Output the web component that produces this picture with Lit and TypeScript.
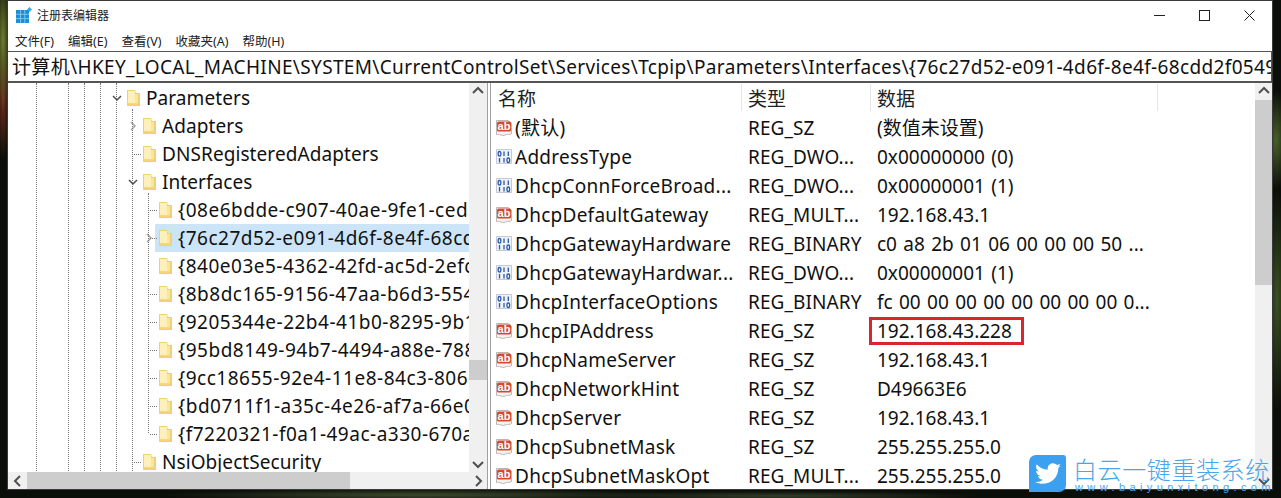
import { LitElement, html, css, svg } from "lit";
import { customElement } from "lit/decorators.js";

type TreeRow = { label: string; x: number; arrow?: "open" | "closed"; sel?: boolean; guid?: boolean };
const treeRows: TreeRow[] = [
  { label: "Parameters", x: 119, arrow: "open" },
  { label: "Adapters", x: 135, arrow: "closed" },
  { label: "DNSRegisteredAdapters", x: 135 },
  { label: "Interfaces", x: 135, arrow: "open" },
  { label: "{08e6bdde-c907-40ae-9fe1-cedd3c7d1f2a}", x: 151, guid: true },
  { label: "{76c27d52-e091-4d6f-8e4f-68cdd2f05492}", x: 151, arrow: "closed", sel: true, guid: true },
  { label: "{840e03e5-4362-42fd-ac5d-2efc8a1e77b0}", x: 151, guid: true },
  { label: "{8b8dc165-9156-47aa-b6d3-55418e2c09d1}", x: 151, guid: true },
  { label: "{9205344e-22b4-41b0-8295-9b1e6a4f0c37}", x: 151, guid: true },
  { label: "{95bd8149-94b7-4494-a88e-78830f2d61ac}", x: 151, guid: true },
  { label: "{9cc18655-92e4-11e8-84c3-806e6f6e6963}", x: 151, guid: true },
  { label: "{bd0711f1-a35c-4e26-af7a-66e0b3d2c815}", x: 151, guid: true },
  { label: "{f7220321-f0a1-49ac-a330-670a4e9d1b26}", x: 151, guid: true },
  { label: "NsiObjectSecurity", x: 135 },
];

/* dotted tree guides: [x, top, height] relative to the tree pane */
const vGuides = [
  [28, 0, 388], [60, 0, 388], [76, 0, 388], [92, 0, 388], [108, 0, 388],
  [124, 26, 362], [140, 110, 240],
];
/* [x, y, width] */
const hGuides = [
  [126, 71, 7], [142, 127, 7], [142, 155, 7], [142, 211, 7], [142, 239, 7], [142, 267, 7],
  [142, 295, 7], [142, 323, 7], [142, 351, 7], [126, 379, 7],
];

type Value = { name: string; type: string; data: string; kind: "ab" | "bin"; mark?: boolean };
const values: Value[] = [
  { name: "(默认)", type: "REG_SZ", data: "(数值未设置)", kind: "ab" },
  { name: "AddressType", type: "REG_DWO...", data: "0x00000000 (0)", kind: "bin" },
  { name: "DhcpConnForceBroad...", type: "REG_DWO...", data: "0x00000001 (1)", kind: "bin" },
  { name: "DhcpDefaultGateway", type: "REG_MULT...", data: "192.168.43.1", kind: "ab" },
  { name: "DhcpGatewayHardware", type: "REG_BINARY", data: "c0 a8 2b 01 06 00 00 00 50 ...", kind: "bin" },
  { name: "DhcpGatewayHardwar...", type: "REG_DWO...", data: "0x00000001 (1)", kind: "bin" },
  { name: "DhcpInterfaceOptions", type: "REG_BINARY", data: "fc 00 00 00 00 00 00 00 00 0...", kind: "bin" },
  { name: "DhcpIPAddress", type: "REG_SZ", data: "192.168.43.228", kind: "ab", mark: true },
  { name: "DhcpNameServer", type: "REG_SZ", data: "192.168.43.1", kind: "ab" },
  { name: "DhcpNetworkHint", type: "REG_SZ", data: "D49663E6", kind: "ab" },
  { name: "DhcpServer", type: "REG_SZ", data: "192.168.43.1", kind: "ab" },
  { name: "DhcpSubnetMask", type: "REG_SZ", data: "255.255.255.0", kind: "ab" },
  { name: "DhcpSubnetMaskOpt", type: "REG_MULT...", data: "255.255.255.0", kind: "ab" },
];

const folder = html`<svg class="folder" width="13" height="16" viewBox="0 0 13 16">
  <path d="M0 0h8l1 3h4v13H0z" fill="#f3d06f"/>
  <path d="M1 1h7v12H1z" fill="#fdf0b8"/>
  <path d="M8 4h3v9H8z" fill="#fbe59a"/>
  <path d="M1 13h10.500v1.500H1z" fill="#f6d878"/>
</svg>`;

const chevOpen = html`<svg width="12" height="12" viewBox="0 0 12 12"><path d="M2 4l4 4 4-4" fill="none" stroke="#4d4d4d" stroke-width="1.500"/></svg>`;
const chevClosed = html`<svg width="12" height="12" viewBox="0 0 12 12"><path d="M4 2l4 4-4 4" fill="none" stroke="#a6a6a6" stroke-width="1.500"/></svg>`;

const abIcon = html`<svg class="vicon" width="16" height="18" viewBox="0 0 16 18">
  <path d="M.5 1.500h11.500l3.500 2.500v10.500c-2 1.500-3.500.5-5 1s-3.500 1.500-5.500.5-3-.5-4.500-.5z" fill="#f7f3ee" stroke="#bdb5b1"/>
  <rect x="1" y="2.500" width="14" height="10" rx="1.500" fill="#d34a30"/>
  <text x="8" y="11" text-anchor="middle" class="abt">ab</text>
</svg>`;
const binIcon = html`<svg class="vicon" width="16" height="18" viewBox="0 0 16 18">
  <path d="M.5 1.500h15v14H.5z" fill="#eff2f8" stroke="#c3c9da"/>
  <g fill="none" stroke="#2d5aa5" stroke-width="1.300">
    <rect x="2.200" y="3.500" width="2.600" height="4.500" rx="1.200"/>
    <path d="M8 3.500v4.500M12.300 3.500v4.500M3.500 10v4.500M8 10v4.500"/>
    <rect x="11" y="10" width="2.600" height="4.500" rx="1.200"/>
  </g>
</svg>`;

const up = svg`<path d="M3 9l5-5 5 5" fill="none" stroke="#505050" stroke-width="2"/>`;
const down = svg`<path d="M3 6l5 5 5-5" fill="none" stroke="#505050" stroke-width="2"/>`;
const left = svg`<path d="M10 3L5 8l5 5" fill="none" stroke="#505050" stroke-width="2"/>`;
const right = svg`<path d="M6 3l5 5-5 5" fill="none" stroke="#505050" stroke-width="2"/>`;
const arrow = (p: unknown) => html`<svg width="16" height="16" viewBox="0 0 16 16">${p}</svg>`;

@customElement("app-root")
export class AppRoot extends LitElement {
  static styles = css`
    :host {
      display: block;
      width: 1281px;
      height: 498px;
      box-sizing: border-box;
      padding: 1px 8px 9px 8px;
      font-family: "Noto Sans", "Noto Sans CJK SC", sans-serif;
      color: #111;
      overflow: hidden;
      position: relative;
      background:
        radial-gradient(ellipse 8px 70px at 3px 40px, #6f7f2e 0, transparent 100%),
        radial-gradient(ellipse 7px 60px at 3px 100px, #6e2c1c 0, transparent 100%),
        radial-gradient(ellipse 14px 50px at 1276px 140px, #47602a 0, transparent 100%),
        radial-gradient(ellipse 12px 110px at 1277px 300px, #3a5223 0, transparent 100%),
        radial-gradient(ellipse 260px 6px at 420px 495px, #3c4a2c 0, transparent 100%),
        radial-gradient(ellipse 200px 5px at 780px 496px, #333d28 0, transparent 100%),
        #0b0f09;
    }
    .win {
      height: 100%;
      width: 1264px;
      background: #fff;
      display: flex;
      flex-direction: column;
      box-shadow: 0 0 0 1px #3a3a3a;
      overflow: hidden;
    }
    .title {
      height: 28px;
      padding: 0 0 1px 8px;
      display: flex;
      align-items: center;
      font-size: 12px;
      flex: none;
    }
    .title .appname { margin-left: 5px; color: #222; }
    .controls { margin-left: auto; display: flex; align-items: center; }
    .controls span { width: 45px; height: 29px; display: flex; align-items: center; justify-content: center; }
    .menu {
      height: 20px;
      padding: 0 0 1px 7px;
      display: flex;
      align-items: center;
      gap: 14px;
      font-size: 12.5px;
      color: #222;
      flex: none;
    }
    .addr {
      height: 32px;
      box-sizing: border-box;
      border-top: 1px solid #555;
      border-bottom: 2px solid #555;
      border-right: 1px solid #555;
      font-size: 19px;
      letter-spacing: .35px;
      line-height: 31px;
      padding-left: 4px;
      white-space: nowrap;
      overflow: hidden;
      flex: none;
    }
    .panes { flex: 1; display: flex; min-height: 0; }
    .left { width: 479px; flex: none; display: flex; flex-direction: column; background: #fff; }
    .left-top { flex: 1; display: flex; min-height: 0; }
    .tree { width: 461px; position: relative; overflow: hidden; padding-top: 1px; flex: none; }
    .row {
      height: 28px;
      font-size: 19px;
      line-height: 28px;
      white-space: nowrap;
      position: relative;
      display: flex;
      align-items: center;
    }
    .row.sel { background: #cce4f8; margin-left: 147px; }
    .row.guid { letter-spacing: .5px; }
    .row.plain { letter-spacing: .08px; }
    .chev { position: absolute; top: 8px; display: flex; }
    .folder { flex: none; margin-right: 6px; }
    .guide { position: absolute; }
    .guide.v { width: 0; border-left: 1px dotted #777; }
    .guide.h { height: 0; border-top: 1px dotted #777; }
    .vbar { width: 18px; flex: none; background: #f0f0f0; display: flex; flex-direction: column; align-items: center; }
    .vbar .arr { height: 17px; display: flex; align-items: center; }
    .vbar .spring { flex: 1; }
    .vthumb { width: 100%; background: #cdcdcd; flex: none; height: 20px; margin-top: 260px; }
    .hbar { height: 17px; flex: none; background: #f0f0f0; display: flex; align-items: center; }
    .hbar .arr { width: 19px; display: flex; justify-content: center; flex: none; }
    .hthumb { height: 100%; width: 323px; background: #cdcdcd; }
    .spring { flex: 1; }
    .sep { width: 4px; flex: none; background: #fff; border-left: 1px solid #a0a0a0; border-right: 1px solid #a0a0a0; box-sizing: border-box; }
    .right { flex: 1; display: flex; min-width: 0; }
    .list { flex: 1; min-width: 0; overflow: hidden; }
    .head, .vrow {
      display: grid;
      grid-template-columns: 251px 129px 287px;
      white-space: nowrap;
    }
    .head { height: 30px; font-size: 19px; color: #222; }
    .head div { padding-left: 6px; border-right: 1px solid #e5e5e5; height: 27px; margin-top: 1px; line-height: 31px; }
    .head div:first-child { padding-left: 7px; }
    .vrow { height: 29px; font-size: 19px; line-height: 28px; align-items: center; }
    .vrow > div { padding-left: 6px; overflow: hidden; }
    .vrow .n { padding-left: 5px; display: flex; align-items: center; gap: 3px; overflow: visible; letter-spacing: .27px; }
    .vrow .d { word-spacing: 1.4px; overflow: visible; }
    .vrow .t { letter-spacing: .1px; }
    .vicon { flex: none; }
    .abt { font: bold 11px "Liberation Sans", sans-serif; fill: #fff; letter-spacing: 0; }
    .mark { display: inline-block; outline: 3px solid #d8262c; padding: 2px 9px 1px 5px; margin-left: -5px; line-height: 19px; }
    .rbar { width: 17px; flex: none; background: #f0f0f0; display: flex; flex-direction: column; align-items: center; }
    .rbar .arr { height: 17px; display: flex; align-items: center; }
    .rthumb { width: 100%; height: 185px; background: #cdcdcd; flex: none; }
    .rbar .arr.b { margin-top: auto; }
    .logo {
      position: absolute;
      left: 1029px;
      top: 455px;
      display: flex;
      gap: 7px;
    }
    .badge {
      width: 37px;
      height: 37px;
      background: #3aa0ef;
      border-radius: 7px 3px 7px 0;
      display: flex;
      align-items: center;
      justify-content: center;
    }
    .lt-col { display: flex; flex-direction: column; margin-top: -1px; }
    .cn { font-size: 24px; font-weight: 300; color: #4aa5ec; line-height: 30px; letter-spacing: .6px; font-family: "Noto Sans CJK SC", sans-serif; white-space: nowrap; }
    .url { font: 11px/9px "Liberation Sans", sans-serif; color: #4aa5ec; letter-spacing: 4.400px; white-space: nowrap; margin-top: -1px; padding-left: 2px; }
  `;

  render() {
    return html`
      <div class="win">
        <div class="title">
          <svg width="16" height="16" viewBox="0 0 16 16">
            <rect x="0" y="3" width="13" height="13" fill="#1a8fd8"/>
            <path d="M4.500 3v13M8.800 3v13M0 7.300h13M0 11.600h13" stroke="#8fd0f2" stroke-width=".8"/>
            <path d="M13.500 0l2.500 2.500-2.500 2.500-2.500-2.500z" fill="#3fa9e0"/>
          </svg>
          <span class="appname">注册表编辑器</span>
          <div class="controls">
            <span><svg width="11" height="11" viewBox="0 0 11 11"><path d="M0 5.500h11" stroke="#222"/></svg></span>
            <span><svg width="11" height="11" viewBox="0 0 11 11"><rect x=".5" y=".5" width="10" height="10" fill="none" stroke="#222"/></svg></span>
            <span><svg width="11" height="11" viewBox="0 0 11 11"><path d="M.5.500l10 10M10.500.500l-10 10" stroke="#222"/></svg></span>
          </div>
        </div>
        <div class="menu">
          <span>文件(F)</span><span>编辑(E)</span><span>查看(V)</span><span>收藏夹(A)</span><span>帮助(H)</span>
        </div>
        <div class="addr">计算机\\HKEY_LOCAL_MACHINE\\SYSTEM\\CurrentControlSet\\Services\\Tcpip\\Parameters\\Interfaces\\{76c27d52-e091-4d6f-8e4f-68cdd2f05492}</div>
        <div class="panes">
          <div class="left">
            <div class="left-top">
              <div class="tree">
                ${treeRows.map((r) => {
                  const pad = r.sel ? r.x - 147 : r.x;
                  return html`<div class="row ${r.sel ? "sel" : ""} ${r.guid ? "guid" : "plain"}" style="padding-left:${pad}px">
                    ${r.arrow
                      ? html`<span class="chev" style="left:${pad - 16}px">${r.arrow === "open" ? chevOpen : chevClosed}</span>`
                      : ""}
                    ${folder}<span>${r.label}</span>
                  </div>`;
                })}
                ${vGuides.map(([x, t, h]) => html`<i class="guide v" style="left:${x}px;top:${t}px;height:${h}px"></i>`)}
                ${hGuides.map(([x, y, w]) => html`<i class="guide h" style="left:${x}px;top:${y}px;width:${w}px"></i>`)}
              </div>
              <div class="vbar">
                <div class="arr">${arrow(up)}</div>
                <div class="vthumb"></div>
                <div class="spring"></div>
                <div class="arr">${arrow(down)}</div>
              </div>
            </div>
            <div class="hbar">
              <div class="arr">${arrow(left)}</div>
              <div class="hthumb"></div>
              <div class="spring"></div>
              <div class="arr">${arrow(right)}</div>
            </div>
          </div>
          <div class="sep"></div>
          <div class="right">
            <div class="list">
              <div class="head"><div>名称</div><div>类型</div><div>数据</div></div>
              ${values.map(
                (v) => html`<div class="vrow">
                  <div class="n">${v.kind === "ab" ? abIcon : binIcon}<span>${v.name}</span></div>
                  <div class="t">${v.type}</div>
                  <div class="d">${v.mark ? html`<span class="mark">${v.data}</span>` : v.data}</div>
                </div>`,
              )}
            </div>
            <div class="rbar">
              <div class="arr">${arrow(up)}</div>
              <div class="rthumb"></div>
              <div class="arr b">${arrow(down)}</div>
            </div>
          </div>
        </div>
      </div>
      <div class="logo">
        <div class="badge">
          <svg width="26" height="22" viewBox="0 0 24 20">
            <path fill="#fff" d="M24 2.400c-.9.400-1.800.7-2.800.8 1-.6 1.800-1.600 2.200-2.700-1 .6-2 1-3.100 1.200C19.300.7 18 0 16.600 0c-2.700 0-4.900 2.200-4.900 4.900 0 .4 0 .8.100 1.100C7.700 5.800 4.100 3.900 1.700.9c-.4.700-.7 1.600-.7 2.500 0 1.700.9 3.200 2.200 4.100-.8 0-1.600-.2-2.200-.6v.1c0 2.400 1.700 4.400 3.900 4.800-.4.100-.8.200-1.300.2-.3 0-.6 0-.9-.1.600 2 2.400 3.400 4.600 3.400-1.700 1.300-3.800 2.100-6.100 2.100-.4 0-.8 0-1.200-.1C2.200 18.300 4.800 19 7.500 19c9.100 0 14-7.500 14-14v-.6c1-.7 1.800-1.600 2.500-2z"/>
          </svg>
        </div>
        <div class="lt-col">
          <div class="cn">白云一键重装系统</div>
          <div class="url">www.baiyunxitong.com</div>
        </div>
      </div>
    `;
  }
}
